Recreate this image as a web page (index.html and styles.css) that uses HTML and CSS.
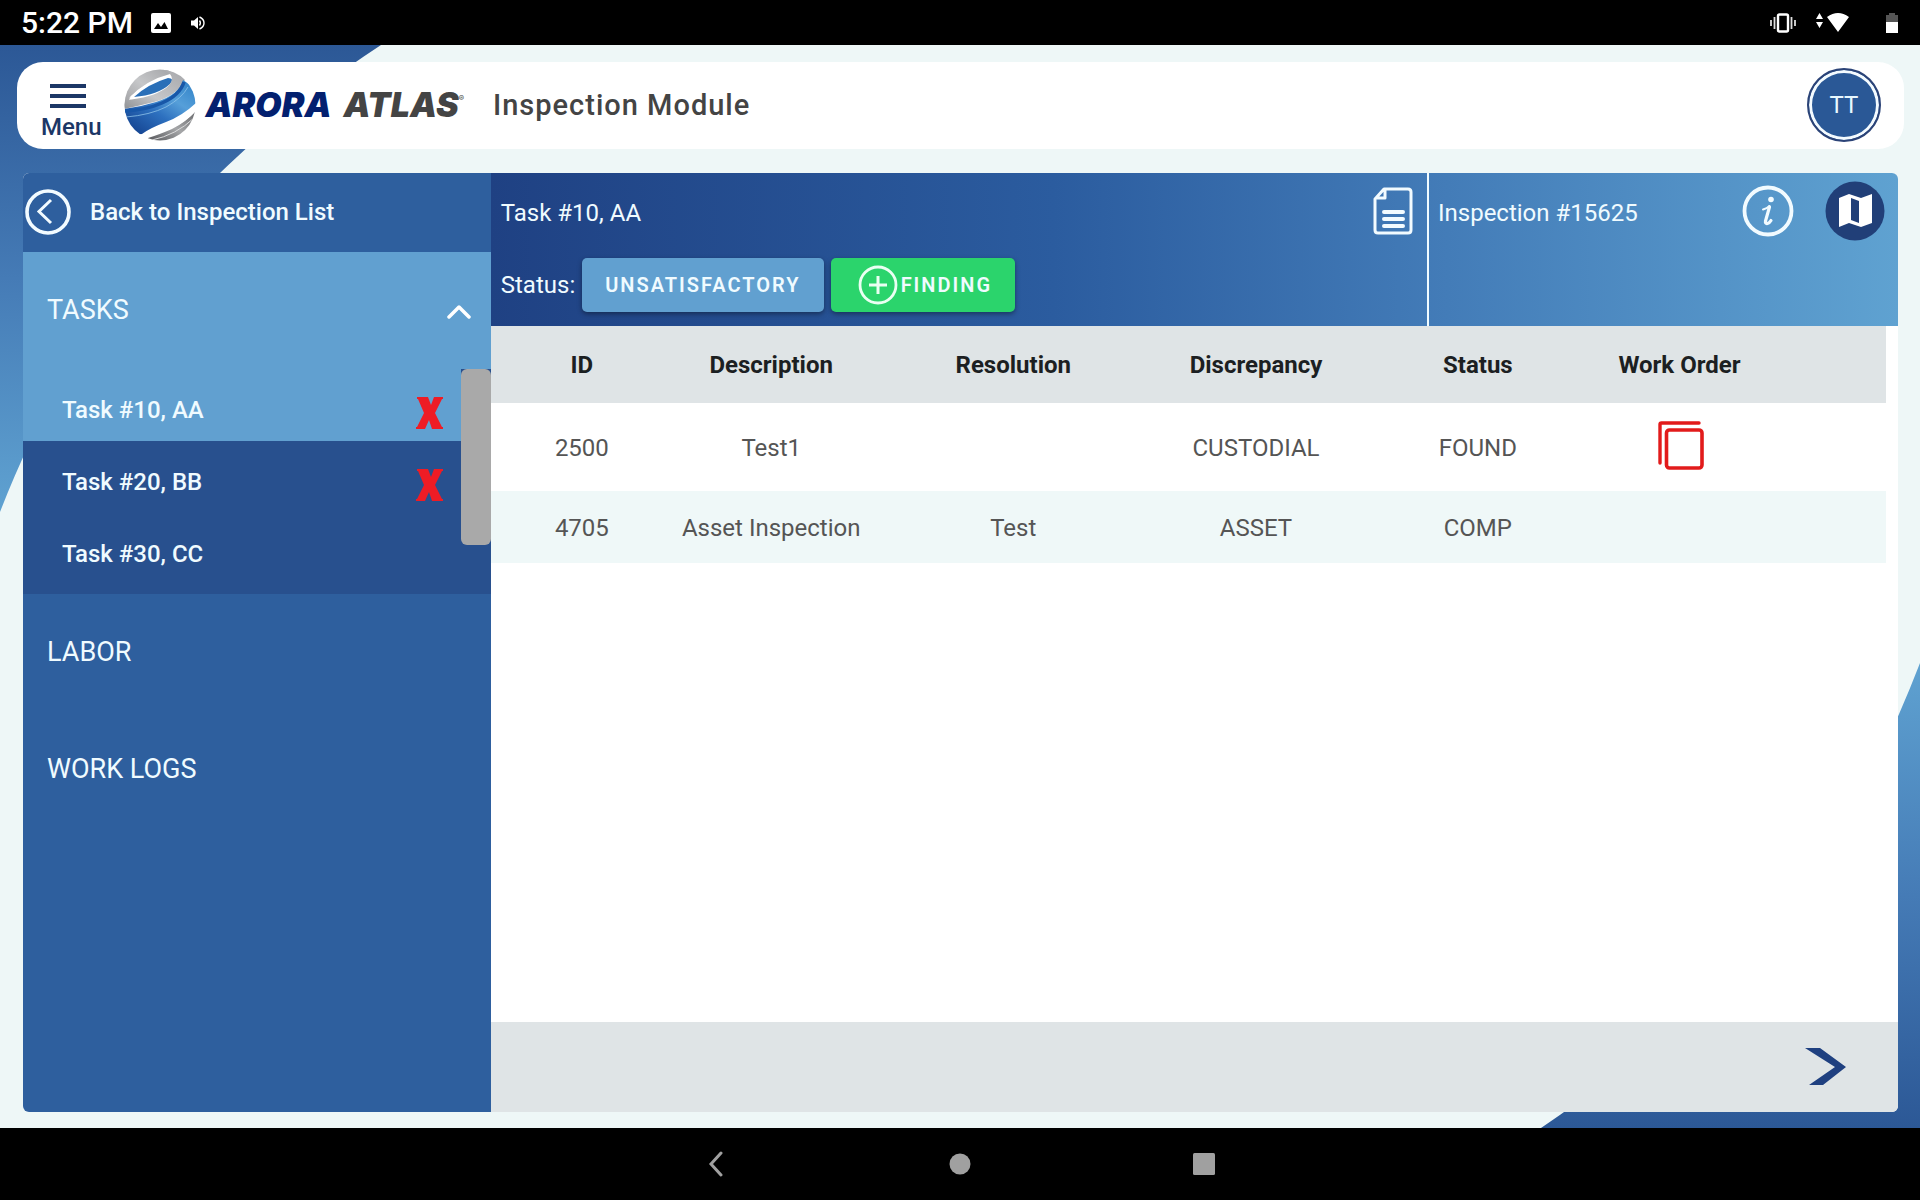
FILE: index.html
```html
<!DOCTYPE html>
<html lang="en">
<head>
<meta charset="utf-8">
<meta name="viewport" content="width=device-width, initial-scale=1">
<title>Arora Atlas - Inspection Module</title>
<link rel="stylesheet" href="styles.css">
</head>
<body>
<div class="statusbar">
  <span class="clock">5:22 PM</span>
  <svg class="st-image" width="20" height="20" viewBox="0 0 20 20"><rect width="20" height="20" rx="2" fill="#fff"/><path d="M3 16l4-6 3 4 3.500-5L17 16z" fill="#000"/></svg>
  <svg class="st-sound" width="14" height="14" viewBox="0 0 14 14"><path d="M0 4.500h3L7 1v12L3 9.500H0z" fill="#fff"/><path d="M8.500 4.500q1.800 2.500 0 5M8.500 1q4.500 2 4.500 6t-4.500 6" fill="none" stroke="#fff" stroke-width="1.400"/></svg>
  <span class="spacer"></span>
  <svg width="26" height="20" viewBox="0 0 26 20"><rect x="8" y="1.500" width="10" height="17" rx="1.500" fill="none" stroke="#fff" stroke-width="2.400"/><path d="M1 7v6M4.500 4v12M21.500 4v12M25 7v6" stroke="#ddd" stroke-width="1.800"/></svg>
  <svg class="st-wifi" width="34" height="20" viewBox="0 0 34 20"><path d="M0 6l3.500-6L7 6zM0 9h7l-3.500 6zM11 4q11-8 22 0L22 19z" fill="#fff"/></svg>
  <svg class="st-battery" width="12" height="20" viewBox="0 0 12 20"><path d="M0 2h3V0h6v2h3v7H0z" fill="#555"/><path d="M0 9h12v11H0z" fill="#fff"/></svg>
</div>

<div class="app">
  <svg class="corner corner-top" viewBox="0 0 381 467" aria-hidden="true"><defs><linearGradient id="cg" x1="0" y1="0" x2="0" y2="1"><stop offset="0" stop-color="#2c5896"/><stop offset=".5" stop-color="#457bb6"/><stop offset="1" stop-color="#5fa2d1"/></linearGradient></defs><path d="M0 0H381C320 40 265 84 220 128C120 226 50 340 0 467z" fill="url(#cg)"/></svg>
  <svg class="corner corner-bottom" viewBox="0 0 381 467" aria-hidden="true"><path d="M0 0H379C320 40 265 84 220 128C115 226 50 335 0 465z" fill="url(#cg)"/></svg>

  <header class="topbar">
    <button class="menu" type="button">
      <svg width="36" height="24" viewBox="0 0 36 24"><path d="M0 2h36M0 12h36M0 22h36" stroke="#1c3766" stroke-width="4"/></svg>
      <span>Menu</span>
    </button>
    <a class="logo" href="#">
      <svg width="72" height="72" viewBox="0 0 72 72" aria-hidden="true">
        <defs>
          <linearGradient id="blue" x1="1" y1="0" x2=".1" y2="1"><stop offset="0" stop-color="#2c7fc6"/><stop offset=".35" stop-color="#569fd9"/><stop offset=".6" stop-color="#2d70bf"/><stop offset="1" stop-color="#123f8c"/></linearGradient>
          <linearGradient id="cap" x1="0" y1="1" x2="1" y2="0"><stop offset="0" stop-color="#9b9c9f"/><stop offset=".5" stop-color="#c6c7c9"/><stop offset="1" stop-color="#a2a3a6"/></linearGradient>
          <linearGradient id="ring" x1="0" y1="1" x2="1" y2="0"><stop offset="0" stop-color="#8f9194"/><stop offset=".4" stop-color="#c6c7ca"/><stop offset="1" stop-color="#a5a6a9"/></linearGradient>
          <linearGradient id="base" x1="0" y1="1" x2="1" y2="0"><stop offset="0" stop-color="#55565a"/><stop offset=".5" stop-color="#a5a6a8"/><stop offset="1" stop-color="#66676a"/></linearGradient>
          <clipPath id="ball"><circle cx="36" cy="36" r="35.500"/></clipPath>
        </defs>
        <g clip-path="url(#ball)">
          <rect width="72" height="72" fill="#fff"/>
          <path d="M0 40V0H44L49 5Q26 10 7 27z" fill="url(#cap)"/>
          <path d="M5 29Q22 11 46 5Q49 5 48 8Q36 14 14 25z" fill="#fff"/>
          <path d="M10 28Q24 15 44 9Q51 9 46 15Q34 26 10 28z" fill="#2a6fb8"/>
          <path d="M1 31Q28 29 42 19Q52 11 45 4L38 0H52Q64 6 60 13Q52 27 30 33Q14 37 0 40z" fill="url(#ring)"/>
          <path d="M0 40Q16 38 32 33Q56 25 59 11L72 20V34Q58 47 42 53Q26 59 18 65L8 66Q0 54 0 40z" fill="url(#blue)"/>
          <path d="M1 42Q22 41 38 34Q56 26 60 13" fill="none" stroke="#1857a8" stroke-width="3.500"/>
          <path d="M2 48Q26 46 42 38Q58 29 64 18" fill="none" stroke="#8fc4ea" stroke-width=".8"/>
          <path d="M24 69Q34 66 48 60Q62 53 72 42V72H24z" fill="url(#base)"/>
          <path d="M28 71Q52 66 70 49" fill="none" stroke="#dcdcdd" stroke-width="1"/>
          <path d="M17 67Q32 59 46 55Q62 49 72 37V42Q60 54 46 60Q34 65 22 69z" fill="#fff"/>
        </g>
      </svg>
      <span class="brand"><span class="brand-arora">ARORA</span><span class="brand-atlas">ATLAS<sup>®</sup></span></span>
    </a>
    <h1>Inspection Module</h1>
    <button class="avatar" type="button">TT</button>
  </header>

  <main class="panel">
    <nav class="side">
      <a class="back" href="#">
        <svg width="46" height="46" viewBox="0 0 46 46"><circle cx="23" cy="23" r="21" fill="none" stroke="#f2fbff" stroke-width="3.600"/><path d="M26 11L14 22.500 26 34" fill="none" stroke="#f2fbff" stroke-width="3"/></svg>
        <span>Back to Inspection List</span>
      </a>
      <button class="section section-open" type="button" aria-expanded="true">
        <span>TASKS</span>
        <svg width="24" height="16" viewBox="0 0 24 16"><path d="M2 13L12 3l10 10" fill="none" stroke="#fff" stroke-width="3.500" stroke-linecap="round" stroke-linejoin="round"/></svg>
      </button>
      <div class="tasks">
        <div class="task-list">
          <a class="task task-on" href="#">Task #10, AA
            <svg width="28" height="32" viewBox="0 0 28 32" aria-label="Unsatisfactory"><path d="M1 0h11l3 8 3-8h9v2h-1l-7 14 7 14h1v2H16l-3-9-4 9H0v-2h1l7-14L2 2H1z" fill="#ee1c25"/></svg></a>
          <a class="task" href="#">Task #20, BB
            <svg width="28" height="32" viewBox="0 0 28 32" aria-label="Unsatisfactory"><path d="M1 0h11l3 8 3-8h9v2h-1l-7 14 7 14h1v2H16l-3-9-4 9H0v-2h1l7-14L2 2H1z" fill="#ee1c25"/></svg></a>
          <a class="task" href="#">Task #30, CC</a>
        </div>
        <div class="thumb"></div>
      </div>
      <button class="section" type="button">LABOR</button>
      <button class="section" type="button">WORK LOGS</button>
    </nav>

    <section class="content">
      <div class="bar">
        <div class="bar-task">
          <div class="bar-row">
            <h2>Task #10, AA</h2>
            <button class="icon" type="button" aria-label="Document">
              <svg width="40" height="48" viewBox="0 0 40 48"><path d="M11 2H35q3 0 3 3V43q0 3-3 3H5q-3 0-3-3V12zM12 3v8H3" fill="none" stroke="#f2fbff" stroke-width="3" stroke-linejoin="round"/><path d="M11 25h19M11 32h19M11 39h19" stroke="#f2fbff" stroke-width="4" stroke-linecap="round"/></svg>
            </button>
          </div>
          <div class="status">
            <span>Status:</span>
            <button class="btn" type="button">UNSATISFACTORY</button>
            <button class="btn btn-add" type="button"><svg width="40" height="40" viewBox="0 0 40 40"><circle cx="20" cy="20" r="18" fill="none" stroke="#eafff2" stroke-width="2.800"/><path d="M20 11v18M11 20h18" stroke="#eafff2" stroke-width="3"/></svg>FINDING</button>
          </div>
        </div>
        <div class="bar-insp">
          <div class="bar-row">
            <h2>Inspection #15625</h2>
            <button class="icon" type="button" aria-label="Information">
              <svg width="52" height="52" viewBox="0 0 52 52"><circle cx="26" cy="26" r="23.500" fill="none" stroke="#f2fbff" stroke-width="3.800"/><circle cx="29" cy="14.500" r="2.800" fill="#f2fbff"/><path d="M21 24.500q4-1 6.500-3.500" fill="none" stroke="#f2fbff" stroke-width="2" stroke-linecap="round"/><path d="M27.500 22l-4 14q-.5 3 2 2.500 2-.5 3.500-3" fill="none" stroke="#f2fbff" stroke-width="3.200" stroke-linejoin="round" stroke-linecap="round"/></svg>
            </button>
            <button class="icon" type="button" aria-label="Map">
              <svg width="60" height="60" viewBox="0 0 60 60"><circle cx="30" cy="30" r="29.500" fill="#213f78"/><path d="M14 17l10-4 12 4 11-4v29l-11 4-12-4-10 4z" fill="#fff"/><path d="M26 17l8 3v22l-8-3z" fill="#213f78"/></svg>
            </button>
          </div>
        </div>
      </div>
      <div class="table-wrap">
        <table>
          <colgroup><col class="c-id"><col class="c-desc"><col class="c-res"><col class="c-mid"><col class="c-mid"><col class="c-wo"><col></colgroup>
          <thead><tr><th>ID</th><th>Description</th><th>Resolution</th><th>Discrepancy</th><th>Status</th><th>Work Order</th><th></th></tr></thead>
          <tbody>
            <tr class="tall"><td>2500</td><td>Test1</td><td></td><td>CUSTODIAL</td><td>FOUND</td><td><button class="icon copy" type="button" aria-label="Open work order"><svg width="46" height="49" viewBox="0 0 46 49"><path d="M2 42V3.500q0-1.500 1.500-1.500H41" fill="none" stroke="#e21b1b" stroke-width="3.400" stroke-linecap="round"/><rect x="8.500" y="9" width="35.500" height="38" rx="3" fill="none" stroke="#e21b1b" stroke-width="3.600"/></svg></button></td><td></td></tr>
            <tr><td>4705</td><td>Asset Inspection</td><td>Test</td><td>ASSET</td><td>COMP</td><td></td><td></td></tr>
          </tbody>
        </table>
      </div>
      <footer class="foot">
        <button class="icon" type="button" aria-label="Next"><svg width="42" height="38" viewBox="0 0 42 38"><path d="M0 0h15l26 19-23 18H4l26-18z" fill="#1f4080"/></svg></button>
      </footer>
    </section>
  </main>
</div>

<div class="navbar">
  <button class="icon" type="button" aria-label="Back"><svg width="24" height="26" viewBox="0 0 24 26"><path d="M17 2L7 13l10 11" fill="none" stroke="#a0a0a0" stroke-width="3" stroke-linecap="round"/></svg></button>
  <button class="icon" type="button" aria-label="Home"><svg width="24" height="24" viewBox="0 0 24 24"><circle cx="12" cy="12" r="10.500" fill="#a0a0a0"/></svg></button>
  <button class="icon" type="button" aria-label="Recent apps"><svg width="24" height="24" viewBox="0 0 24 24"><rect x="1" y="1" width="22" height="22" rx="1.500" fill="#a0a0a0"/></svg></button>
</div>
</body>
</html>
```
FILE: styles.css
```css
* { box-sizing: border-box; }

body {
  margin: 0;
  min-height: 100vh;
  display: flex;
  flex-direction: column;
  font-family: Roboto, "Liberation Sans", sans-serif;
  font-size: 24px;
  line-height: 32px;
  background: #000;
}

svg { display: block; flex: none; }
a { color: inherit; text-decoration: none; }
button { font: inherit; color: inherit; background: none; border: 0; padding: 0; margin: 0; cursor: pointer; }
h1, h2 { margin: 0; font-size: inherit; font-weight: 400; }

/* system bars */
.statusbar {
  height: 45px;
  padding: 0 22px 0 21px;
  display: flex;
  align-items: center;
  color: #fff;
}
.clock { font-size: 30px; font-weight: 500; }
.st-image { margin-left: 18px; }
.st-sound { margin-left: 20px; }
.spacer { flex: 1; }
.st-wifi { margin: 0 36px 0 20px; }

.navbar {
  height: 72px;
  display: flex;
  justify-content: center;
  align-items: center;
  gap: 220px;
}

/* page area with the two curved corners */
.app {
  flex: 1;
  position: relative;
  display: flex;
  flex-direction: column;
  gap: 24px;
  padding: 17px 16px 16px 17px;
  background: #eef7f7;
}
.corner { position: absolute; width: 381px; height: 467px; }
.corner-top { top: 0; left: 0; }
.corner-bottom { right: 0; bottom: 0; transform: rotate(180deg); }

.topbar {
  position: relative;
  height: 87px;
  padding: 0 23px 2px 24px;
  display: flex;
  align-items: center;
  background: #fff;
  border-radius: 26px;
}
.menu {
  display: flex;
  flex-direction: column;
  align-items: center;
  gap: 3px;
  padding-top: 18px;
  color: #1c3766;
  font-weight: 500;
}
.menu svg { margin-right: 6px; }
.logo { display: flex; align-items: center; gap: 10px; margin-left: 22px; }
.brand {
  display: flex;
  gap: 12px;
  font-family: Inter, Lato, sans-serif;
  font-size: 34px;
  font-style: italic;
  font-weight: 900;
}
.brand-arora { color: #03206f; }
.brand-atlas { color: #444; }
.brand sup { font-size: 8px; font-weight: 400; vertical-align: 16px; line-height: 0; }
h1 { margin-left: 29px; font-size: 29px; font-weight: 500; color: #444; letter-spacing: 1px; }
.avatar {
  margin-left: auto;
  width: 74px;
  height: 74px;
  border: 2px solid #2b4377;
  border-radius: 50%;
  background: #2a5896;
  box-shadow: inset 0 0 0 3px #f4fbff;
  color: #e8f8ff;
}

/* main panel */
.panel {
  position: relative;
  flex: 1;
  display: flex;
  margin: 0 6px;
  background: #fff;
  border-radius: 6px;
  overflow: hidden;
}
.side {
  width: calc(25% - 1px);
  display: flex;
  flex-direction: column;
  background: #2e5f9e;
  color: #f0fbff;
}
.back {
  height: 79px;
  padding: 0 0 2px 2px;
  display: flex;
  align-items: center;
  gap: 19px;
  font-weight: 500;
}
.section {
  height: 117px;
  padding: 0 20px 2px 24px;
  display: flex;
  align-items: center;
  justify-content: space-between;
  font-size: 27px;
}
.section-open { background: #61a0d0; }
.section-open svg { margin-top: 4px; }
.tasks {
  height: 225px;
  display: flex;
  align-items: flex-start;
  background: #28508e;
  font-weight: 500;
}
.task-list { flex: 1; }
.task {
  height: 72px;
  padding: 10px 17px 0 39px;
  display: flex;
  align-items: center;
  justify-content: space-between;
}
.task-on { background: #61a0d0; }
.task svg { margin-top: 6px; }
.thumb { width: 30px; height: 176px; border-radius: 6px; background: #a9a9a9; }

.content { flex: 1; display: flex; flex-direction: column; }
.bar {
  height: 153px;
  display: flex;
  color: #f0fbff;
  background: linear-gradient(90deg, #1f4183, #2b5c9f 40%, #437cb8 68%, #5fa2d1);
}
.bar-task { flex: 1; padding: 0 14px 0 10px; }
.bar-insp { width: 471px; padding: 0 13px 0 9px; border-left: 2px solid #f0fbff; }
.bar-row { height: 76px; display: flex; align-items: center; }
.bar-row h2 { flex: 1; padding-top: 4px; }
.bar-insp .bar-row { gap: 31px; }
.icon { display: inline-flex; align-items: center; justify-content: center; vertical-align: middle; }
.status { height: 72px; display: flex; align-items: center; gap: 7px; }
.btn {
  height: 54px;
  padding: 0 23px;
  display: flex;
  align-items: center;
  font-size: 20px;
  font-weight: 600;
  letter-spacing: 2px;
  background: #61a0d0;
  border-radius: 5px;
  box-shadow: 0 2px 5px rgba(0, 0, 0, 0.4);
}
.btn-add { padding-left: 27px; background: #2bd46c; gap: 3px; }

.table-wrap { flex: 1; padding-right: 12px; }
table { width: 100%; table-layout: fixed; border-collapse: collapse; text-align: center; color: #555; }
.c-id { width: 12.2%; }
.c-desc { width: 15.8%; }
.c-res { width: 18.9%; }
.c-mid { width: 15.9%; }
.c-wo { width: 13%; }
th, td { height: 72px; padding: 0; }
td { padding-top: 2px; }
th { height: 77px; font-weight: 700; color: #1c1f22; background: #dfe4e6; }
th:first-child, td:first-child { padding-left: 12px; }
.tall td { height: 88px; }
.copy { margin: 0 0 6px 4px; }
tbody tr:nth-child(even) { background: #eff8f8; }
.foot {
  height: 90px;
  padding-right: 51px;
  display: flex;
  align-items: center;
  justify-content: flex-end;
  background: #dfe4e6;
}
```
